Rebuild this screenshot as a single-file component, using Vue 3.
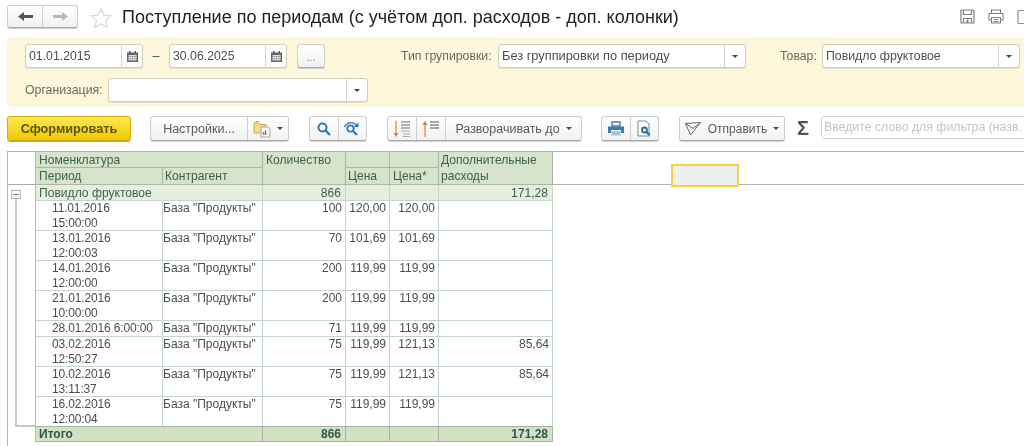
<script setup>
const rows = [
  { d: ['11.01.2016', '15:00:00'], q: '100', p: '120,00', s: '120,00', e: '', h: 30 },
  { d: ['13.01.2016', '12:00:03'], q: '70', p: '101,69', s: '101,69', e: '', h: 30 },
  { d: ['14.01.2016', '12:00:00'], q: '200', p: '119,99', s: '119,99', e: '', h: 30 },
  { d: ['21.01.2016', '10:00:00'], q: '200', p: '119,99', s: '119,99', e: '', h: 30 },
  { d: ['28.01.2016 6:00:00'], q: '71', p: '119,99', s: '119,99', e: '', h: 16, tight: true },
  { d: ['03.02.2016', '12:50:27'], q: '75', p: '119,99', s: '121,13', e: '85,64', h: 30 },
  { d: ['10.02.2016', '13:11:37'], q: '75', p: '119,99', s: '121,13', e: '85,64', h: 30 },
  { d: ['16.02.2016', '12:00:04'], q: '75', p: '119,99', s: '119,99', e: '', h: 30 }
]
const gridRows = ['16px', '17px', '16px', ...rows.map(r => r.h + 'px'), '15px'].join(' ')
</script>

<template>
  <div class="page">
    <header class="top">
      <div class="btn nav">
        <span class="seg navseg">
          <svg width="15" height="11" viewBox="0 0 15 11"><path d="M0 5.500L6 1v3h9v3H6v3z" fill="#555"/></svg>
        </span>
        <span class="seg navseg">
          <svg width="15" height="11" viewBox="0 0 15 11"><path d="M15 5.500L9 1v3H0v3h9v3z" fill="#b8b8b8"/></svg>
        </span>
      </div>
      <svg class="star" width="22" height="22" viewBox="0 0 22 22"><path d="M11 1.500l2.800 6.600 7.100.6-5.400 4.700 1.600 7-6.100-3.700-6.100 3.700 1.600-7L1.100 8.700l7.100-.6z" fill="#fff" stroke="#d8d8d8" stroke-width="1.200"/></svg>
      <h1 class="title">Поступление по периодам (с учётом доп. расходов - доп. колонки)</h1>
      <div class="topicons">
        <svg width="15" height="15" viewBox="0 0 15 15" fill="none" stroke="#808080" stroke-width="1.200"><path d="M1 1h12l1 1v12H1z"/><path d="M3.500 1v4.500h8V1M3.500 14V9.500h8V14"/><path d="M7.500 10.500V14" stroke-width="2"/></svg>
        <svg width="16" height="15" viewBox="0 0 16 15" fill="none" stroke="#808080" stroke-width="1.100"><path d="M3.500 4.500V1h9v3.500M3.500 11H1V4.500h14V11h-2.500"/><path d="M3.500 8.500h9V14h-9zM5.500 10.500h5M5.500 12.500h5"/></svg>
        <svg width="16" height="16" viewBox="0 0 16 16" fill="none" stroke="#909090" stroke-width="1.200"><rect x="1" y="1.500" width="14" height="13" rx="1"/></svg>
      </div>
    </header>

    <section class="panel">
      <div class="prow first">
        <div class="field date">
          <span class="val">01.01.2015</span>
          <span class="fbtn"><svg width="11" height="11" viewBox="0 0 11 11"><path d="M0 1.500h11V11H0z" fill="#666"/><path d="M1.500 4h8v5.500h-8z" fill="#ddd"/><path d="M2 0h1.500v2H2zM7.500 0H9v2H7.500zM2.500 5h1v1h-1zM5 5h1v1H5zM7.500 5h1v1h-1zM2.500 7.200h1v1h-1zM5 7.200h1v1H5zM7.500 7.200h1v1h-1z" fill="#555"/></svg></span>
        </div>
        <span class="dash">–</span>
        <div class="field date">
          <span class="val">30.06.2025</span>
          <span class="fbtn"><svg width="11" height="11" viewBox="0 0 11 11"><path d="M0 1.500h11V11H0z" fill="#666"/><path d="M1.500 4h8v5.500h-8z" fill="#ddd"/><path d="M2 0h1.500v2H2zM7.500 0H9v2H7.500zM2.500 5h1v1h-1zM5 5h1v1H5zM7.500 5h1v1h-1zM2.500 7.200h1v1h-1zM5 7.200h1v1H5zM7.500 7.200h1v1h-1z" fill="#555"/></svg></span>
        </div>
        <span class="btn dots">...</span>
        <label class="lbl lbl-type">Тип групировки:</label>
        <div class="field type">
          <span class="val">Без группировки по периоду</span>
          <span class="fbtn"><i class="caret"></i></span>
        </div>
        <label class="lbl lbl-good">Товар:</label>
        <div class="field good">
          <span class="val">Повидло фруктовое</span>
          <span class="fbtn"><i class="caret"></i></span>
        </div>
      </div>
      <div class="prow second">
        <label class="lbl lbl-org">Организация:</label>
        <div class="field org">
          <span class="val"></span>
          <span class="fbtn"><i class="caret"></i></span>
        </div>
      </div>
    </section>

    <section class="toolbar">
      <button class="primary">Сформировать</button>
      <div class="btn group settings">
        <span class="seg grow">Настройки...</span>
        <span class="seg w40">
          <svg width="20" height="18" viewBox="0 0 20 18"><path d="M1 3h5l1 1.500h6V13H1z" fill="#f5d98a" stroke="#d0a848"/><path d="M2.500 1.500h4" stroke="#d0a848"/><path d="M8 7h7l2 2v8H8z" fill="#f7f7f7" stroke="#a8a8a8"/><path d="M10.500 12v3" stroke="#5aa05a" stroke-width="1.500"/><path d="M12.500 10.500V15" stroke="#d05a4a" stroke-width="1.500"/></svg>
          <i class="caret"></i>
        </span>
      </div>
      <div class="btn group search">
        <span class="seg w29">
          <svg width="16" height="16" viewBox="0 0 16 16" fill="none" stroke="#2a7ab8" stroke-width="2"><circle cx="6.500" cy="6.500" r="4"/><path d="M9.500 9.500L14 14" stroke-width="2.400"/></svg>
        </span>
        <span class="seg w28">
          <svg width="18" height="17" viewBox="0 0 18 17" fill="none" stroke="#2a7ab8"><circle cx="7.500" cy="8.500" r="3.200" stroke-width="1.800"/><path d="M10 11l4 4" stroke-width="2.200"/><path d="M1.500 7C2.500 3.500 7.500 1 12 4l2 2" stroke-width="1.400"/><path d="M15.500 2.500v4.500H11z" fill="#2a7ab8" stroke="none"/></svg>
        </span>
      </div>
      <div class="btn group expand">
        <span class="seg w29">
          <svg width="20" height="18" viewBox="0 0 20 18"><path d="M4 1v14" stroke="#e8763a" stroke-width="1.200"/><path d="M1.500 13l2.500 4 2.500-4z" fill="#e8763a"/><path d="M9 2h9M9 5h9M9 8h9" stroke="#666" stroke-width="1.200"/><path d="M9 11h9M11 14h7M11 16.500h7" stroke="#aaa" stroke-width="1.200"/></svg>
        </span>
        <span class="seg w29">
          <svg width="20" height="18" viewBox="0 0 20 18"><path d="M4 3v14" stroke="#e8763a" stroke-width="1.200"/><path d="M1.500 5L4 1l2.500 4z" fill="#e8763a"/><path d="M9 2h9M9 5h9M9 8h9" stroke="#555" stroke-width="1.200"/></svg>
        </span>
        <span class="seg grow">Разворачивать до <i class="caret gap"></i></span>
      </div>
      <div class="btn group print">
        <span class="seg w29">
          <svg width="16" height="15" viewBox="0 0 16 15"><path d="M4 5V1h8v4z" fill="none" stroke="#4a7fa8" stroke-width="1.400"/><path d="M0 5.500h16V12h-3V9H3v3H0z" fill="#3f7cab"/><path d="M3.500 10h9v4.500h-9z" fill="#a8c4da"/></svg>
        </span>
        <span class="seg w28">
          <svg width="15" height="17" viewBox="0 0 15 17"><path d="M1 1h8l3 3v12H1z" fill="#fff" stroke="#5a8cb0"/><circle cx="7.500" cy="10" r="2.500" fill="none" stroke="#2a6a9a" stroke-width="1.800"/><path d="M9.500 12l3 3" stroke="#2a6a9a" stroke-width="2.200"/></svg>
        </span>
      </div>
      <div class="btn group send">
        <span class="seg grow">
          <svg class="plane" width="16" height="14" viewBox="0 0 16 14" fill="none" stroke="#666" stroke-width="1"><path d="M.5 1.500l15-1L5.500 13z"/><path d="M.5 1.500L8 6.500l7.500-6"/></svg>
          Отправить <i class="caret gap"></i>
        </span>
      </div>
      <span class="sigma">Σ</span>
      <div class="filter">Введите слово для фильтра (назв.</div>
    </section>

    <section class="sheet">
      <div class="grid" :style="{ gridTemplateRows: gridRows }">
        <div class="c corner"></div>
        <div class="c hd span2">Номенклатура</div>
        <div class="c hd rowspan2">Количество</div>
        <div class="c hd"></div>
        <div class="c hd"></div>
        <div class="c hd rowspan2 ext tightl">Дополнительные<br>расходы</div>
        <div class="c hd sub">Период</div>
        <div class="c hd sub tightl">Контрагент</div>
        <div class="c hd sub tightl">Цена</div>
        <div class="c hd sub">Цена*</div>

        <div class="tree" :style="{ gridRow: '3 / span ' + (rows.length + 1) }">
          <span class="minus"></span>
          <span class="vline"></span>
        </div>
        <div class="c grp span2">Повидло фруктовое</div>
        <div class="c grp num">866</div>
        <div class="c grp"></div>
        <div class="c grp"></div>
        <div class="c grp num">171,28</div>

        <template v-for="r in rows" :key="r.d[0]">
          <div class="c body period"><span v-for="l in r.d" :key="l">{{ l }}</span></div>
          <div class="c body partner">База "Продукты"</div>
          <div class="c body num">{{ r.q }}</div>
          <div class="c body num">{{ r.p }}</div>
          <div class="c body num">{{ r.s }}</div>
          <div class="c body num">{{ r.e }}</div>
        </template>

        <div class="c blank"></div>
        <div class="c tot span2">Итого</div>
        <div class="c tot num">866</div>
        <div class="c tot"></div>
        <div class="c tot"></div>
        <div class="c tot num">171,28</div>
      </div>
      <div class="rest"></div>
      <div class="cursor"></div>
    </section>
  </div>
</template>

<style>
html, body { margin: 0; background: #fff; overflow: hidden; }
</style>

<style scoped>
.page {
  width: 1024px;
  height: 446px;
  overflow: hidden;
  font-family: "Liberation Sans", Arial, sans-serif;
  font-size: 12px;
  color: #4e4e4e;
  background: #fff;
  filter: blur(0.35px);
}
.top {
  height: 37px;
  display: flex;
  align-items: flex-start;
  padding: 5px 0 0 7px;
  box-sizing: border-box;
}
.btn {
  box-sizing: border-box;
  display: flex;
  background: linear-gradient(#fff, #f1f1f1);
  border: 1px solid #cdcdcd;
  border-bottom-color: #a9a9a9;
  border-radius: 3px;
  box-shadow: 0 1px 0 #d0d0d0;
}
.seg {
  display: flex;
  align-items: center;
  justify-content: center;
  box-sizing: border-box;
  height: 100%;
  border-right: 1px solid #cfcfcf;
}
.seg:last-child { border-right: 0; }
.nav { width: 71px; height: 23px; }
.navseg { flex: 1; }
.star { margin: 2px 0 0 12px; }
.title {
  margin: 2px 0 0 10px;
  font-size: 18px;
  font-weight: 400;
  line-height: 20px;
  color: #222;
  white-space: nowrap;
}
.topicons {
  margin: 4px -9px 0 auto;
  display: flex;
  gap: 13px;
}
.panel {
  margin-left: 7px;
  height: 70px;
  box-sizing: border-box;
  background: #fdf7dc;
  padding: 7px 0 0 18px;
  font-size: 12.300px;
}
.prow { display: flex; align-items: center; }
.second { margin-top: 10px; }
.field {
  box-sizing: border-box;
  height: 24px;
  display: flex;
  background: #fff;
  border: 1px solid #d0cdbb;
  border-radius: 3px;
  box-shadow: 0 1px 0 #e4e0c8;
}
.val {
  flex: 1;
  line-height: 22px;
  padding-left: 3px;
  white-space: nowrap;
}
.type .val { font-size: 12.800px; }
.fbtn {
  width: 20px;
  border-left: 1px solid #d4d4d4;
  display: flex;
  align-items: center;
  justify-content: center;
}
.date { width: 118px; }
.dash { width: 26px; text-align: center; color: #444; }
.dots {
  width: 28px;
  height: 24px;
  margin-left: 10px;
  justify-content: center;
  align-items: flex-end;
  line-height: 18px;
  color: #777;
  font-size: 10px;
}
.lbl { white-space: nowrap; color: #6a6a5c; }
.lbl-type { width: 97px; margin-left: 76px; }
.type { width: 248px; }
.lbl-good { width: 42px; margin-left: 34px; }
.good { width: 198px; }
.lbl-org { width: 83px; }
.org { width: 260px; }
.caret {
  display: inline-block;
  width: 0;
  height: 0;
  border: 3px solid transparent;
  border-top: 3px solid #444;
  border-bottom: 0;
}
.caret.gap { margin-left: 6px; }
.toolbar {
  display: flex;
  align-items: flex-start;
  margin: 9px 0 0 7px;
  height: 25px;
}
.toolbar > * { flex-shrink: 0; }
.primary {
  width: 124px;
  height: 25px;
  padding: 0;
  font: bold 12.700px "Liberation Sans", Arial, sans-serif;
  color: #5f5210;
  background: linear-gradient(#ffe94f, #f0c800);
  border: 1px solid #d0ac10;
  border-radius: 3px;
  box-shadow: 0 1px 0 #c9a70e;
}
.group { height: 25px; color: #5a5a5a; font-size: 12.500px; }
.grow { flex: 1; white-space: nowrap; }
.w40 { width: 40px; gap: 4px; }
.w29 { width: 29px; }
.w28 { width: 28px; }
.settings { width: 139px; margin-left: 19px; }
.search { width: 58px; margin-left: 20px; }
.expand { width: 195px; margin-left: 20px; }
.print { width: 58px; margin-left: 19px; }
.send { width: 106px; margin-left: 20px; font-size: 12px; }
.plane { margin-right: 7px; }
.sigma {
  width: 36px;
  text-align: center;
  font-size: 20px;
  line-height: 25px;
  font-weight: 700;
  color: #555;
}
.filter {
  box-sizing: border-box;
  width: 210px;
  height: 23px;
  border: 1px solid #d6d6d6;
  border-radius: 3px;
  line-height: 21px;
  padding-left: 2px;
  color: #c4c4c4;
  font-size: 12.300px;
  white-space: nowrap;
  overflow: hidden;
}
.sheet {
  position: relative;
  display: flex;
  align-items: flex-start;
  margin: 10px 0 0 7px;
  height: 295px;
  border-top: 1px solid #b0b0b0;
  border-left: 1px solid #b4b4b4;
  box-sizing: border-box;
}
.grid {
  display: grid;
  grid-template-columns: 28px 127px 100px 83px 44px 49px 114px;
}
.c {
  box-sizing: border-box;
  padding: 0 3px;
  line-height: 15px;
  white-space: nowrap;
  border-right: 1px solid #c2d6cb;
  border-bottom: 1px solid #c2d6cb;
}
.corner { grid-row: span 2; border-right: 1px solid #b8bdb4; border-bottom: 1px solid #a8a8a8; }
.hd {
  background: #d6e4cc;
  color: #3c6150;
  font-size: 12.100px;
  line-height: 16px;
  border-right: 1px solid #aeb5a8;
  border-bottom: 1px solid #aeb5a8;
  overflow: hidden;
}
.sub { line-height: 17px; }
.tightl { padding-left: 2px; }
.span2 { grid-column: span 2; }
.rowspan2 { grid-row: span 2; }
.grp { background: #e6efdd; color: #3c6150; font-size: 12.100px; line-height: 16px; }
.num { text-align: right; padding-right: 3px; }
.grp.num, .tot.num { padding-right: 4px; }
.body { line-height: 15px; }
.partner { padding-left: 0; }
.period {
  display: flex;
  flex-direction: column;
  padding-left: 16px;
  letter-spacing: -0.150px;
}
.tree {
  grid-column: 1;
  position: relative;
  box-sizing: border-box;
  border-right: 1px solid #b8bdb4;
}
.minus {
  position: absolute;
  left: 3px;
  top: 5px;
  width: 10px;
  height: 9px;
  box-sizing: border-box;
  border: 1px solid #b4b4b4;
  background: linear-gradient(#fff, #eee);
}
.minus::after {
  content: "";
  position: absolute;
  left: 1px;
  right: 1px;
  top: 3px;
  height: 1px;
  background: #777;
}
.vline {
  position: absolute;
  left: 7px;
  top: 14px;
  right: 0;
  bottom: 0;
  border-left: 2px solid #c8c8c8;
  border-bottom: 2px solid #c8c8c8;
  box-sizing: border-box;
}
.blank { border-right: 1px solid #b8bdb4; border-bottom: 0; }
.tot {
  background: #d3e2c5;
  color: #2d5a48;
  font-weight: 700;
  margin-top: -1px;
  border-right: 1px solid #a9b0a2;
  border-top: 1px solid #a9b0a2;
  border-bottom: 1px solid #a9b0a2;
  line-height: 14px;
}
.rest {
  flex: 1;
  height: 33px;
  box-sizing: border-box;
  border-bottom: 1px solid #b4b4b4;
}
.cursor {
  position: absolute;
  left: 663px;
  top: 12px;
  width: 68px;
  height: 23px;
  box-sizing: border-box;
  background: #efefef;
  border: 2px solid #f7cf45;
}
</style>
